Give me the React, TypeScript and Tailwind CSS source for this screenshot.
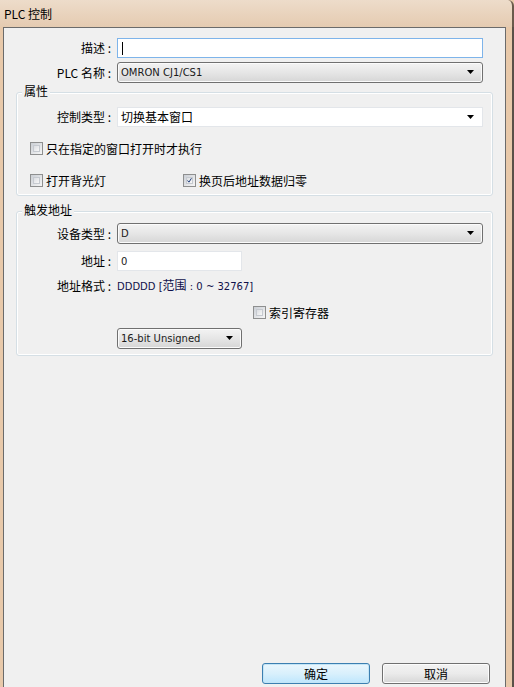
import { ReactNode } from "react";

const cjk = { fontFamily: '"Noto Sans CJK SC", "DejaVu Sans", sans-serif' };
const latin = { fontFamily: '"DejaVu Sans", "Noto Sans CJK SC", sans-serif' };

function Arrow() {
  return (
    <svg width="8" height="5" viewBox="0 0 8 5" className="shrink-0">
      <path d="M0 0 H7 L3.5 4 Z" fill="#000" />
    </svg>
  );
}

function Label({ children, w }: { children: ReactNode; w: string }) {
  return (
    <div className={`${w} shrink-0 text-right text-[12px] leading-none text-black whitespace-nowrap`} style={cjk}>
      {children}
    </div>
  );
}

function Dropdown({ value, w, h = "h-[21px]" }: { value: string; w: string; h?: string }) {
  return (
    <div
      className={`${w} ${h} ml-[6px] flex items-center justify-between rounded-[3px] border border-[#707070] bg-gradient-to-b from-[#f3f3f3] via-[#e6e6e6] to-[#d6d6d6] pl-[3px] pr-[7px] text-[10px] text-[#1a1a1a] shadow-[inset_0_0_0_1px_#fbfbfb]`}
      style={latin}
    >
      <span>{value}</span>
      <Arrow />
    </div>
  );
}

function Checkbox({ checked, label }: { checked?: boolean; label: string }) {
  return (
    <div className="flex items-center gap-[3px]">
      <div className="flex h-[13px] w-[13px] items-center justify-center border border-[#8e8f8f] bg-gradient-to-br from-[#cbcfd5] to-[#f6f6f6] p-[2px]">
        <div className="flex h-full w-full items-center justify-center border border-[#c6cad0] bg-gradient-to-br from-[#dcdee2] to-[#f7f7f7]">
          {checked && (
            <svg width="9" height="9" viewBox="0 0 9 9">
              <path d="M1 4.5 L3.5 7.5 L8 0.5" stroke="#1c3b7a" strokeWidth="1.8" fill="none" />
            </svg>
          )}
        </div>
      </div>
      <span className="text-[12px] leading-none text-black" style={cjk}>
        {label}
      </span>
    </div>
  );
}

function Group({ title, children, className }: { title: string; children: ReactNode; className: string }) {
  return (
    <div className={`relative mx-[12px] rounded-[3px] border border-[#d5dfe5] shadow-[inset_0_0_0_1px_#ffffff] ${className}`}>
      <span className="absolute left-[5px] top-[-8px] bg-[#f0f0f0] px-[2px] text-[12px] leading-none text-black" style={cjk}>
        {title}
      </span>
      {children}
    </div>
  );
}

export default function App() {
  return (
    <div className="flex h-[687px] w-[514px] flex-col overflow-hidden bg-[#e8c9aa]">
      <div className="flex h-[27px] shrink-0 items-center bg-gradient-to-b from-[#eddcca] to-[#e5cbb1] pl-[4px] rounded-tr-[6px] border-r-2 border-[#6a5a4c]">
        <span className="text-[12px] text-black" style={cjk}>
          PLC 控制
        </span>
      </div>
      <div className="flex min-h-0 flex-1">
        <div className="w-[3px] shrink-0" />
        <div className="flex w-[503px] shrink-0 flex-col border-l border-r border-t border-[#6b6b6b] bg-[#f0f0f0]">
          <div className="mt-[10px] flex items-center">
            <Label w="w-[107px]">描述 :</Label>
            <div className="ml-[6px] flex h-[20px] w-[366px] items-center border border-[#7eb4ea] bg-white pl-[4px]">
              <div className="h-[13px] w-px bg-black" />
            </div>
          </div>
          <div className="mt-[4px] flex items-center">
            <Label w="w-[107px]">PLC 名称 :</Label>
            <Dropdown value="OMRON CJ1/CS1" w="w-[366px]" />
          </div>

          <Group title="属性" className="mt-[9px] h-[104px]">
            <div className="mt-[14px] flex items-center">
              <Label w="w-[94px]">控制类型 :</Label>
              <div className="ml-[6px] flex h-[20px] w-[366px] items-center justify-between border border-[#e3e6ea] bg-white pl-[3px] pr-[7px]">
                <span className="text-[12px] leading-none text-black" style={cjk}>
                  切换基本窗口
                </span>
                <Arrow />
              </div>
            </div>
            <div className="mt-[15px] pl-[13px]">
              <Checkbox label="只在指定的窗口打开时才执行" />
            </div>
            <div className="mt-[19px] flex pl-[13px]">
              <div className="w-[153px]">
                <Checkbox label="打开背光灯" />
              </div>
              <Checkbox checked label="换页后地址数据归零" />
            </div>
          </Group>

          <Group title="触发地址" className="mt-[15px] h-[145px]">
            <div className="mt-[11px] flex items-center">
              <Label w="w-[94px]">设备类型 :</Label>
              <Dropdown value="D" w="w-[366px]" />
            </div>
            <div className="mt-[7px] flex items-center">
              <Label w="w-[94px]">地址 :</Label>
              <div className="ml-[6px] flex h-[20px] w-[125px] items-center border border-[#e3e6ea] bg-white pl-[3px] text-[10px] text-[#1a1a1a]" style={latin}>
                0
              </div>
            </div>
            <div className="mt-[8px] flex items-center">
              <Label w="w-[94px]">地址格式 :</Label>
              <span className="ml-[6px] text-[10px] leading-none text-[#10104a]" style={latin}>
                DDDDD [<span style={cjk} className="text-[12px]">范围</span> : 0 ~ 32767]
              </span>
            </div>
            <div className="mt-[14px] pl-[236px]">
              <Checkbox label="索引寄存器" />
            </div>
            <div className="mt-[9px] flex">
              <div className="w-[94px]" />
              <Dropdown value="16-bit Unsigned" w="w-[125px]" h="h-[21px]" />
            </div>
          </Group>

          <div className="mt-auto flex justify-end gap-[12px] pb-[3px] pr-[15px]">
            <button className="h-[21px] w-[108px] rounded-[3px] border border-[#3c7fb1] bg-gradient-to-b from-[#eaf6fd] via-[#d9f0fc] to-[#bee6fd] text-[12px] text-black shadow-[inset_0_0_0_1px_#c4e5f6]" style={cjk}>
              确定
            </button>
            <button className="h-[21px] w-[108px] rounded-[3px] border border-[#707070] bg-gradient-to-b from-[#f2f2f2] via-[#ebebeb] to-[#d6d6d6] text-[12px] text-black shadow-[inset_0_0_0_1px_#fcfcfc]" style={cjk}>
              取消
            </button>
          </div>
        </div>
        <div className="w-[6px] shrink-0" />
        <div className="w-[2px] shrink-0 bg-[#5a5048]" />
      </div>
    </div>
  );
}
